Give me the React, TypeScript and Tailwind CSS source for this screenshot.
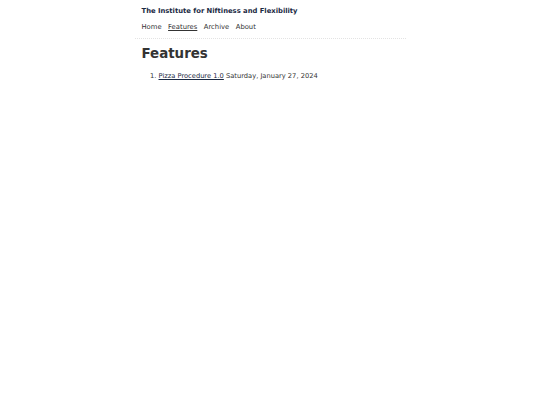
export default function App() {
  return (
    <div className="min-h-screen bg-white font-['DejaVu_Sans',sans-serif] text-[#333]">
      <div className="mx-auto w-[271px] pt-[6px]">
        <header className="border-b border-dotted border-[#e3e3e3] px-[7px] pb-[6px]">
          <a href="#" className="block text-[6.8px] font-bold leading-[10px] text-[#1b2a44]">
            The Institute for Niftiness and Flexibility
          </a>
          <nav className="mt-[6px] flex gap-[6.5px] text-[6.8px] leading-[10px]">
            <a href="#">Home</a>
            <a href="#" className="underline underline-offset-1">Features</a>
            <a href="#">Archive</a>
            <a href="#">About</a>
          </nav>
        </header>
        <main className="px-[7px]">
          <h1 className="mt-[6px] text-[13.4px] font-bold leading-[18px] text-[#333]">Features</h1>
          <ol className="mt-[8px] list-decimal pl-[17px] text-[6.7px] leading-[10px]">
            <li>
              <a href="#" className="text-[#1b2a44] underline underline-offset-1">
                Pizza Procedure 1.0
              </a>{" "}
              Saturday, January 27, 2024
            </li>
          </ol>
        </main>
      </div>
    </div>
  );
}
